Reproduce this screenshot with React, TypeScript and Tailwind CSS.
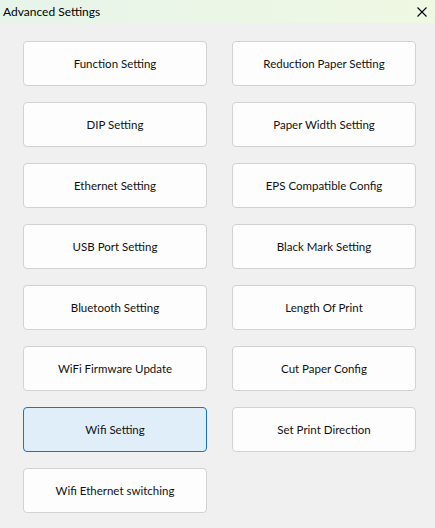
import React from 'react';

const left = [
  'Function Setting',
  'DIP Setting',
  'Ethernet Setting',
  'USB Port Setting',
  'Bluetooth Setting',
  'WiFi Firmware Update',
  'Wifi Setting',
  'Wifi Ethernet switching',
];

const right = [
  'Reduction Paper Setting',
  'Paper Width Setting',
  'EPS Compatible Config',
  'Black Mark Setting',
  'Length Of Print',
  'Cut Paper Config',
  'Set Print Direction',
];

function Btn({ label, active }: { label: string; active?: boolean }) {
  return (
    <button
      className={
        'flex h-[45px] w-[184px] items-center justify-center rounded-[4px] border text-[11.5px] text-[#111] ' +
        (active ? 'border-[#1a73c8] bg-[#e0eef9]' : 'border-[#d2d2d2] bg-[#fdfdfd]')
      }
    >
      {label}
    </button>
  );
}

export default function App() {
  return (
    <div
      className="flex h-[528px] w-[435px] flex-col bg-[#f0f0f0]"
      style={{ fontFamily: 'Lato, "Noto Sans", sans-serif' }}
    >
      {/* title bar */}
      <div className="flex h-[23px] items-center justify-between bg-gradient-to-r from-[#e6f4ea] to-[#eff8e2] pl-[3px] pr-[8px]">
        <span className="text-[12px] text-black">Advanced Settings</span>
        <svg width="10" height="10" viewBox="0 0 10 10" className="text-black">
          <path d="M0.5 0.5L9.5 9.5M9.5 0.5L0.5 9.5" stroke="currentColor" strokeWidth="1.1" />
        </svg>
      </div>

      <div className="flex gap-[25px] pl-[23px] pt-[18px]">
        <div className="flex flex-col gap-[16px]">
          {left.map((l) => (
            <Btn key={l} label={l} active={l === 'Wifi Setting'} />
          ))}
        </div>
        <div className="flex flex-col gap-[16px]">
          {right.map((l) => (
            <Btn key={l} label={l} />
          ))}
        </div>
      </div>
    </div>
  );
}
